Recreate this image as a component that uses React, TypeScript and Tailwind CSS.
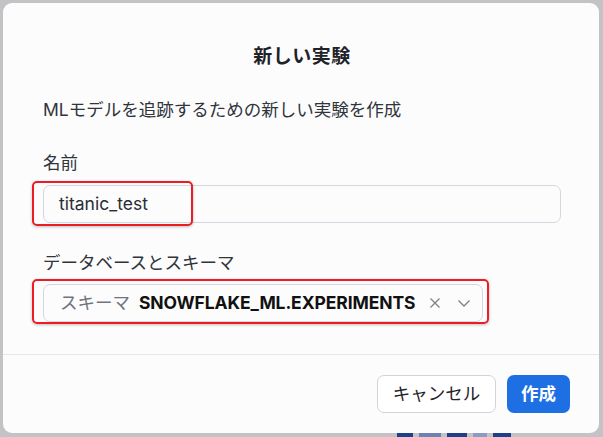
import React from "react";

const FONT = "font-['Inter','Noto_Sans_CJK_JP',sans-serif]";

export default function App() {
  return (
    <div className={`w-[603px] h-[437px] bg-[#c3c3c5] overflow-hidden flex flex-col ${FONT}`}>
      <div className="mx-[3px] mt-[3px] w-[596px] h-[430px] shrink-0 bg-[#fcfcfd] rounded-[9px] flex flex-col relative">
        <div className="flex flex-col pl-10 pr-[38px] pt-[40px]">
          <h1 className="text-[19px] leading-[28px] font-bold text-[#1f2328] text-center tracking-[0.5px]">新しい実験</h1>
          <p className="mt-[27px] text-[17.5px] leading-[24px] text-[#30343b]">MLモデルを追跡するための新しい実験を作成</p>
          <label className="mt-[29px] text-[17.5px] leading-[24px] text-[#30343b]">名前</label>
          <div className="mt-[10px] relative">
            <div className="h-[38px] w-full rounded-[7px] border border-[#d3d7e0] bg-[#fcfcfd] flex items-center pl-[15px] text-[17.5px] text-[#2a2d33]">
              titanic_test
            </div>
            <div className="absolute left-[-11px] top-[-4px] w-[161px] h-[45px] rounded-[5px] border-2 border-[#ec1c24] shadow-[0_1px_3px_rgba(0,0,0,0.25)]" />
          </div>
          <label className="mt-[28px] text-[17.5px] leading-[24px] text-[#30343b]">データベースとスキーマ</label>
          <div className="mt-[9px] relative w-[440px]">
            <div className="h-[38px] w-full rounded-[7px] border border-[#d3d7e0] bg-[#fcfcfd] flex items-center pl-[16px] pr-[10px] text-[17.5px]">
              <span className="text-[#70747c]">スキーマ</span>
              <span className="ml-[9px] font-bold text-[#111] tracking-[-0.1px]">SNOWFLAKE_ML.EXPERIMENTS</span>
              <span className="ml-auto flex items-center gap-[14px] text-[#7c8088]">
                <svg width="14" height="14" viewBox="0 0 14 14" fill="none" stroke="currentColor" strokeWidth="1.3"><path d="M2.5 2.5l9 9M11.5 2.5l-9 9" /></svg>
                <svg width="16" height="16" viewBox="0 0 16 16" fill="none" stroke="currentColor" strokeWidth="1.3"><path d="M2.5 5.5l5.5 5.5 5.5-5.5" /></svg>
              </span>
            </div>
            <div className="absolute left-[-11px] top-[-5px] w-[457px] h-[45px] rounded-[5px] border-2 border-[#ec1c24] shadow-[0_1px_3px_rgba(0,0,0,0.25)]" />
          </div>
        </div>
        <div className="mt-[32px] h-px bg-[#e3e6eb]" />
        <div className="flex justify-end gap-[11px] pr-[29px] pt-[20px]">
          <button className="h-[38px] w-[119px] rounded-[7px] border border-[#cfd4dc] bg-white text-[17.5px] text-[#1f2328] flex items-center justify-center">キャンセル</button>
          <button className="h-[38px] w-[63px] rounded-[7px] bg-[#1d6fe3] text-[17.5px] font-bold text-white flex items-center justify-center">作成</button>
        </div>
      </div>
      <div className="flex h-[4px] ml-[397px] gap-[6px]">
        <div className="w-[16px] bg-[#1f3f8a]" />
        <div className="w-[22px] bg-[#6b82b5]" />
        <div className="w-[20px] bg-[#1f3f8a]" />
        <div className="w-[14px] bg-[#8b9cc4]" />
        <div className="w-[18px] bg-[#1f3f8a]" />
      </div>
    </div>
  );
}
